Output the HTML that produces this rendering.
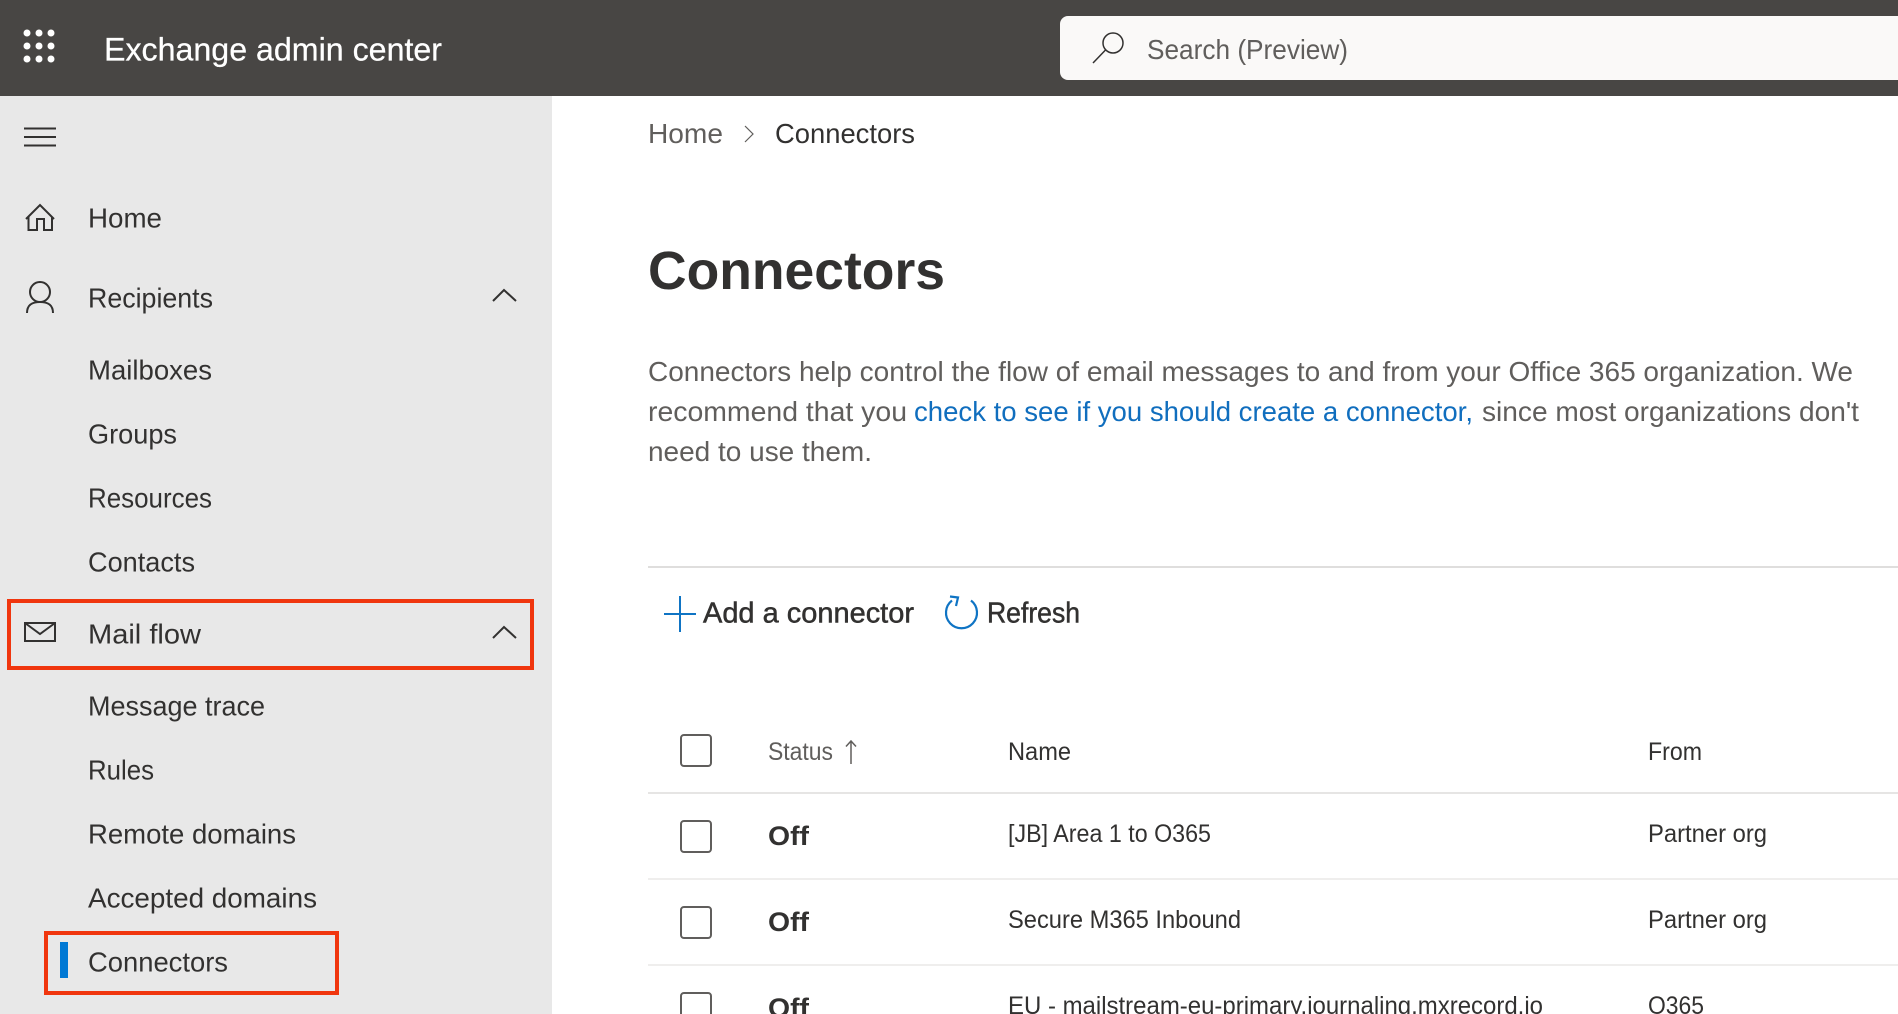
<!DOCTYPE html>
<html lang="en">
<head>
<meta charset="utf-8">
<title>Exchange admin center</title>
<style>
html,body{margin:0;padding:0;background:#fff;width:1898px;height:1014px;overflow:hidden}
svg{display:block}
text{font-family:"Liberation Sans",sans-serif;white-space:pre}
.nav{font-size:28px;fill:#323130}
.p{font-size:28px;fill:#605e5c}
.l{font-size:28px;fill:#106ebe}
.t{font-size:25px;fill:#323130}
.off{font-size:27px;fill:#323130;font-weight:700}
.tb{font-size:29px;fill:#323130;stroke:#323130;stroke-width:.5}
.cb{fill:#fff;stroke:#605e5c;stroke-width:2}
</style>
</head>
<body>
<svg width="1898" height="1014" viewBox="0 0 1898 1014" xmlns="http://www.w3.org/2000/svg">
<rect width="1898" height="1014" fill="#fff"/>
<rect width="552" height="1014" fill="#e8e8e8"/>
<rect width="1898" height="96" fill="#484644"/>

<!-- waffle -->
<g fill="#fff">
<circle cx="27" cy="33" r="3.500"/><circle cx="39" cy="33" r="3.500"/><circle cx="51" cy="33" r="3.500"/>
<circle cx="27" cy="46" r="3.500"/><circle cx="39" cy="46" r="3.500"/><circle cx="51" cy="46" r="3.500"/>
<circle cx="27" cy="59" r="3.500"/><circle cx="39" cy="59" r="3.500"/><circle cx="51" cy="59" r="3.500"/>
</g>
<text x="104" y="60.500" font-size="32" fill="#fff" stroke="#fff" stroke-width=".25" textLength="338" lengthAdjust="spacingAndGlyphs">Exchange admin center</text>

<!-- search -->
<path d="M1898 16H1068a8 8 0 0 0-8 8v48a8 8 0 0 0 8 8h830z" fill="#faf9f8"/>
<circle cx="1113" cy="43" r="10" fill="none" stroke="#323130" stroke-width="1.500"/>
<path d="M1105.500 50L1093 63" fill="none" stroke="#323130" stroke-width="1.500"/>
<text x="1147" y="59" font-size="28" fill="#605e5c" textLength="201" lengthAdjust="spacingAndGlyphs">Search (Preview)</text>

<!-- hamburger -->
<path d="M24 128.500H56M24 137H56M24 145.500H56" stroke="#323130" stroke-width="2" fill="none"/>

<!-- home icon -->
<path d="M26 219L40 205L54 219M28.500 217V230H37V219H44V230H52V217" fill="none" stroke="#323130" stroke-width="2"/>
<text class="nav" x="88" y="227.500" textLength="74" lengthAdjust="spacingAndGlyphs">Home</text>

<!-- person icon -->
<circle cx="40" cy="292" r="10" fill="none" stroke="#323130" stroke-width="2"/>
<path d="M27 313C27 304 33 302 40 302C47 302 53 304 53 313" fill="none" stroke="#323130" stroke-width="2"/>
<text class="nav" x="88" y="307.500" textLength="125" lengthAdjust="spacingAndGlyphs">Recipients</text>
<path d="M493 301L504 290L516 301" fill="none" stroke="#323130" stroke-width="2"/>

<text class="nav" x="88" y="379.500" textLength="124" lengthAdjust="spacingAndGlyphs">Mailboxes</text>
<text class="nav" x="88" y="443.500" textLength="89" lengthAdjust="spacingAndGlyphs">Groups</text>
<text class="nav" x="88" y="507.500" textLength="124" lengthAdjust="spacingAndGlyphs">Resources</text>
<text class="nav" x="88" y="571.500" textLength="107" lengthAdjust="spacingAndGlyphs">Contacts</text>

<!-- mail -->
<rect x="25" y="623" width="30" height="18" fill="none" stroke="#323130" stroke-width="2"/>
<path d="M25 623L40 634L55 623" fill="none" stroke="#323130" stroke-width="2"/>
<text class="nav" x="88" y="643.500" textLength="113" lengthAdjust="spacingAndGlyphs">Mail flow</text>
<path d="M493 638L504 627L516 638" fill="none" stroke="#323130" stroke-width="2"/>

<text class="nav" x="88" y="715.500" textLength="177" lengthAdjust="spacingAndGlyphs">Message trace</text>
<text class="nav" x="88" y="779.500" textLength="66" lengthAdjust="spacingAndGlyphs">Rules</text>
<text class="nav" x="88" y="843.500" textLength="208" lengthAdjust="spacingAndGlyphs">Remote domains</text>
<text class="nav" x="88" y="907.500" textLength="229" lengthAdjust="spacingAndGlyphs">Accepted domains</text>
<rect x="60" y="942" width="8" height="36" fill="#0078d4"/>
<text class="nav" x="88" y="971.500" textLength="140" lengthAdjust="spacingAndGlyphs">Connectors</text>

<!-- red boxes -->
<rect x="9" y="601" width="523" height="67" fill="none" stroke="#f0360e" stroke-width="4"/>
<rect x="46" y="933" width="291" height="60" fill="none" stroke="#f0360e" stroke-width="4"/>

<!-- breadcrumb -->
<text x="648" y="143" font-size="28" fill="#605e5c" textLength="75" lengthAdjust="spacingAndGlyphs">Home</text>
<path d="M745 126L753 134L745 142" fill="none" stroke="#605e5c" stroke-width="1.200"/>
<text x="775" y="143" font-size="28" fill="#323130" textLength="140" lengthAdjust="spacingAndGlyphs">Connectors</text>

<!-- heading -->
<text x="648" y="289" font-size="54" font-weight="700" fill="#323130" textLength="297" lengthAdjust="spacingAndGlyphs">Connectors</text>

<!-- paragraph -->
<text class="p" x="648" y="381" textLength="1205" lengthAdjust="spacingAndGlyphs">Connectors help control the flow of email messages to and from your Office 365 organization. We</text>
<text class="p" x="648" y="421" textLength="259" lengthAdjust="spacingAndGlyphs">recommend that you</text>
<text class="l" x="914" y="421" textLength="559" lengthAdjust="spacingAndGlyphs">check to see if you should create a connector,</text>
<text class="p" x="1482" y="421" textLength="377" lengthAdjust="spacingAndGlyphs">since most organizations don't</text>
<text class="p" x="648" y="461" textLength="224" lengthAdjust="spacingAndGlyphs">need to use them.</text>

<rect x="648" y="566" width="1250" height="2" fill="#dfdedd"/>

<!-- toolbar -->
<path d="M680 596V632M664 614H696" stroke="#0f74c4" stroke-width="2" fill="none"/>
<text class="tb" x="703" y="622.500" textLength="211" lengthAdjust="spacingAndGlyphs">Add a connector</text>
<path d="M971 600.500A15.500 15.500 0 1 1 952 600.500" fill="none" stroke="#0f74c4" stroke-width="2.200"/>
<path d="M950 596.500L958 597.500L956 606" fill="none" stroke="#0f74c4" stroke-width="2.200"/>
<text class="tb" x="987" y="622.500" textLength="93" lengthAdjust="spacingAndGlyphs">Refresh</text>

<!-- table header -->
<rect class="cb" x="681" y="735" width="30" height="31" rx="3"/>
<text class="t" x="768" y="760" textLength="65" lengthAdjust="spacingAndGlyphs" style="fill:#605e5c">Status</text>
<path d="M851 764V741M846 746.500L851 741L856 746.500" fill="none" stroke="#605e5c" stroke-width="1.500"/>
<text class="t" x="1008" y="760" textLength="63" lengthAdjust="spacingAndGlyphs">Name</text>
<text class="t" x="1648" y="760" textLength="54" lengthAdjust="spacingAndGlyphs">From</text>
<rect x="648" y="792" width="1250" height="2" fill="#e6e5e4"/>

<!-- rows -->
<rect class="cb" x="681" y="821" width="30" height="31" rx="3"/>
<text class="off" x="768" y="845" textLength="41" lengthAdjust="spacingAndGlyphs">Off</text>
<text class="t" x="1008" y="842" textLength="203" lengthAdjust="spacingAndGlyphs">[JB] Area 1 to O365</text>
<text class="t" x="1648" y="842" textLength="119" lengthAdjust="spacingAndGlyphs">Partner org</text>
<rect x="648" y="878" width="1250" height="2" fill="#efeeed"/>

<rect class="cb" x="681" y="907" width="30" height="31" rx="3"/>
<text class="off" x="768" y="931" textLength="41" lengthAdjust="spacingAndGlyphs">Off</text>
<text class="t" x="1008" y="928" textLength="233" lengthAdjust="spacingAndGlyphs">Secure M365 Inbound</text>
<text class="t" x="1648" y="928" textLength="119" lengthAdjust="spacingAndGlyphs">Partner org</text>
<rect x="648" y="964" width="1250" height="2" fill="#efeeed"/>

<rect class="cb" x="681" y="993" width="30" height="31" rx="3"/>
<text class="off" x="768" y="1017" textLength="41" lengthAdjust="spacingAndGlyphs">Off</text>
<text class="t" x="1008" y="1014" textLength="535" lengthAdjust="spacingAndGlyphs">EU - mailstream-eu-primary.journaling.mxrecord.io</text>
<text class="t" x="1648" y="1014" textLength="56" lengthAdjust="spacingAndGlyphs">O365</text>
</svg>
</body>
</html>
